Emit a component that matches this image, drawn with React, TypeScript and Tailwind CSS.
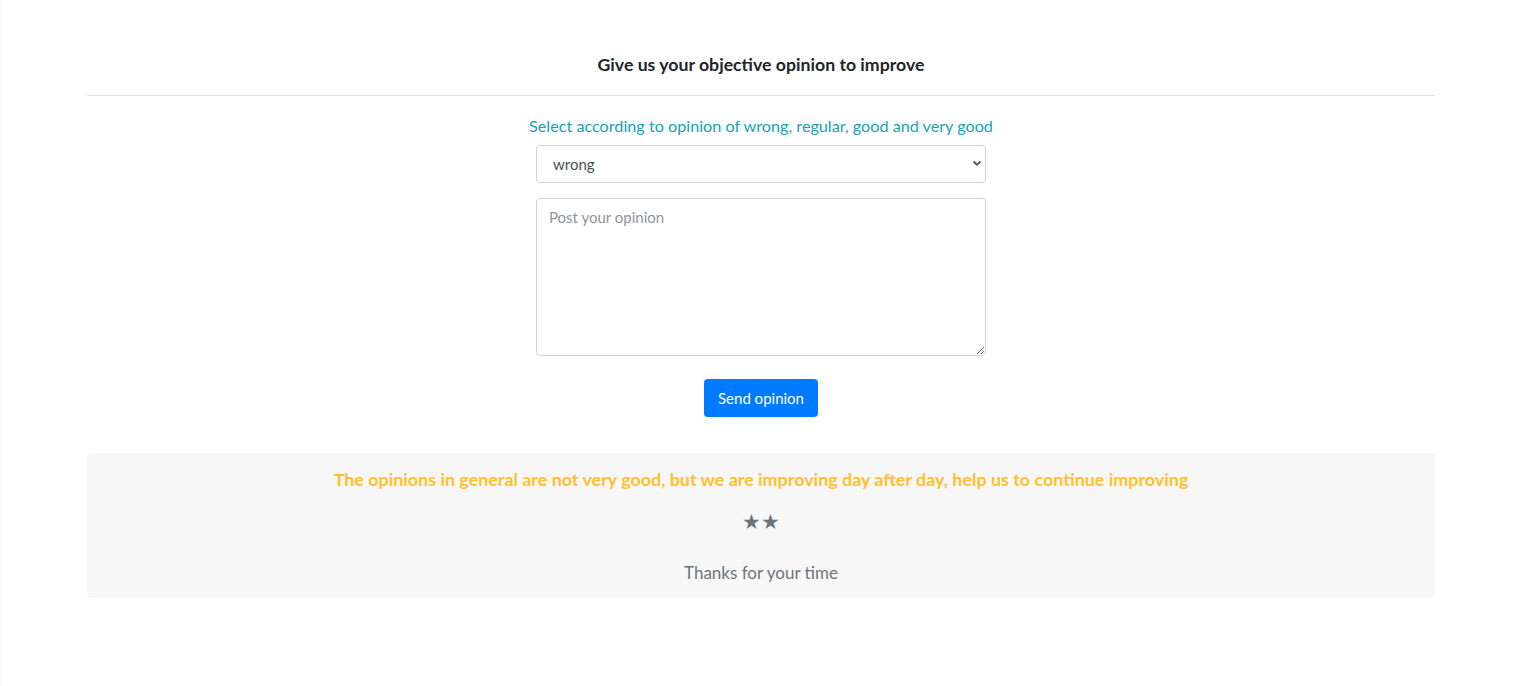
import { useState } from "react";

// Formulario de opinión con resumen de valoraciones
const font = { fontFamily: "Lato, 'Noto Sans', sans-serif" };

export default function App() {
  const [rating, setRating] = useState("wrong");
  const [text, setText] = useState("");

  return (
    <div className="min-h-[686px] bg-white border-l-[3px] border-[#fafafa]" style={font}>
      <div className="ml-[84px] w-[1348px] pt-[53px]">
        {/* Encabezado */}
        <h5 className="h-6 text-center text-[17.7px] leading-6 font-bold text-[#212529]">
          Give us your objective opinion to improve
        </h5>
        <hr className="mt-[18px] border-0 border-t border-[#dee2e6]" />

        {/* Formulario */}
        <div className="flex flex-col items-center">
          <p className="mt-[18px] h-6 text-[16.2px] leading-6 text-[#17a2b8]">
            Select according to opinion of wrong, regular, good and very good
          </p>
          <div className="relative mt-[7px] w-[450px]">
            <select
              value={rating}
              onChange={(e) => setRating(e.target.value)}
              className="h-[38px] w-full appearance-none rounded border border-[#ced4da] bg-white px-4 text-[15px] text-[#495057] outline-none"
            >
              <option value="wrong">wrong</option>
              <option value="regular">regular</option>
              <option value="good">good</option>
              <option value="very good">very good</option>
            </select>
            <svg
              className="pointer-events-none absolute right-[4px] top-[14px]"
              width="10"
              height="8"
              viewBox="0 0 10 8"
            >
              <path d="M1.5 2.5 L5 5.8 L8.5 2.5" stroke="#495057" strokeWidth="1.8" fill="none" />
            </svg>
          </div>
          <textarea
            value={text}
            onChange={(e) => setText(e.target.value)}
            placeholder="Post your opinion"
            className="mt-[15px] h-[158px] w-[450px] rounded border border-[#ced4da] px-3 py-[7px] text-[15px] text-[#495057] outline-none placeholder:text-[#8e959c]"
          />
          <button className="mt-[23px] h-[38px] w-[114px] rounded bg-[#007bff] text-[15px] text-white">
            Send opinion
          </button>
        </div>

        {/* Resumen */}
        <div className="mt-[36px] flex h-[145px] flex-col items-center rounded-sm bg-[#f7f7f7] pt-[14px]">
          <p className="h-6 text-[17.9px] leading-6 font-bold text-[#ffc02e]">
            The opinions in general are not very good, but we are improving day after day, help us to continue improving
          </p>
          <div className="mt-[15px] h-[30px] text-[21px] leading-[30px] text-[#6c757d]">★★</div>
          <p className="mt-[25px] h-6 text-[17px] leading-6 text-[#6c757d]">Thanks for your time</p>
        </div>
      </div>
    </div>
  );
}
